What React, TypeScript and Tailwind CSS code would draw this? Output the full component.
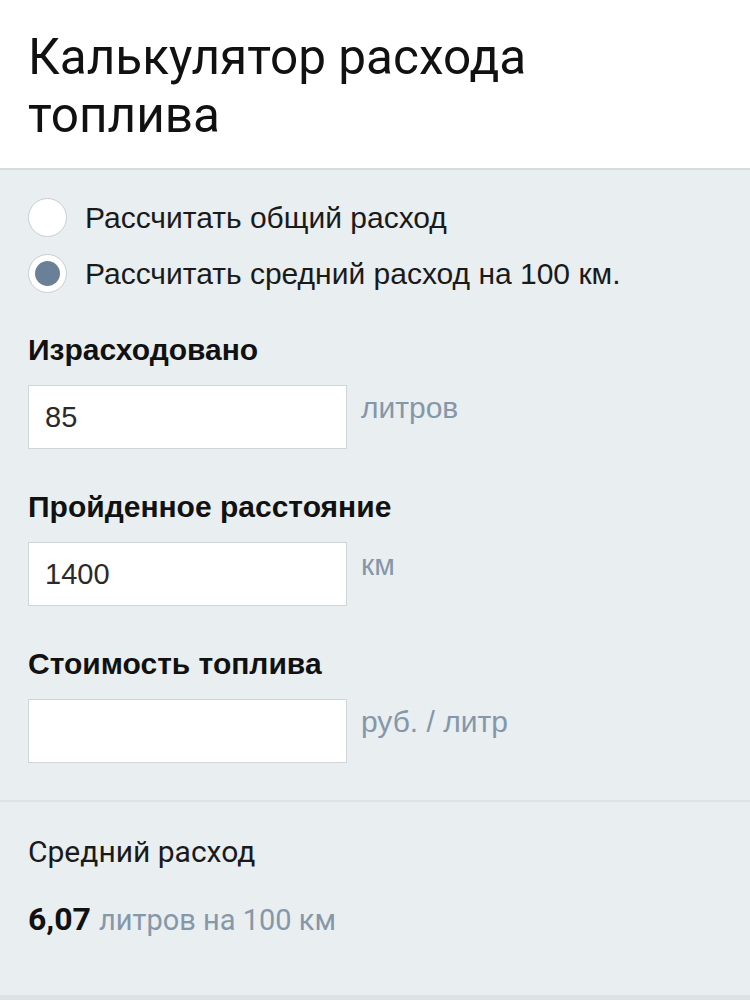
import * as React from "react";

// Fuel consumption calculator (mobile view)

type Mode = "total" | "average";

interface FieldProps {
  label: string;
  value: string;
  unit: string;
  first?: boolean;
  onChange: (v: string) => void;
}

function Field({ label, value, unit, first = false, onChange }: FieldProps) {
  return (
    <div className={first ? "pt-[31px]" : "pt-[40px]"}>
      <div className="text-[30px] font-bold leading-[36px] text-[#111]">{label}</div>
      <div className="mt-[17px] flex items-start gap-[14px]">
        <input
          value={value}
          onChange={(e) => onChange(e.target.value)}
          className="h-[64px] w-[319px] border border-[#cfd5d9] bg-white px-[16px] text-[29px] text-[#2a2a2a] outline-none"
        />
        <span className="pt-[5px] text-[30px] leading-[36px] text-[#8597a8]">{unit}</span>
      </div>
    </div>
  );
}

function Radio({ checked, label, onSelect }: { checked: boolean; label: string; onSelect: () => void }) {
  return (
    <button type="button" onClick={onSelect} className="flex h-[56px] items-center gap-[18px] text-left">
      <span className="flex h-[39px] w-[39px] items-center justify-center rounded-full border border-[#c9ced2] bg-white">
        {checked && <span className="h-[25px] w-[25px] rounded-full bg-[#6a8097]" />}
      </span>
      <span className="text-[30px] text-[#1a1a1a]">{label}</span>
    </button>
  );
}

export default function App() {
  const [mode, setMode] = React.useState<Mode>("average");
  const [fuel, setFuel] = React.useState("85");
  const [distance, setDistance] = React.useState("1400");
  const [price, setPrice] = React.useState("");

  const avg = (parseFloat(fuel) / parseFloat(distance)) * 100;
  const avgText = isFinite(avg) ? avg.toFixed(2).replace(".", ",") : "—";

  return (
    <div className="min-h-[1000px] bg-[#e9eef0] font-['Liberation_Sans',Arial,sans-serif]">
      <header className="border-b-2 border-[#d6dbde] bg-white px-[28px] pb-[24px] pt-[28px]">
        <h1 className="font-['Roboto',sans-serif] text-[49.5px] font-normal leading-[58px] text-[#111]">
          Калькулятор расхода
          <br />
          топлива
        </h1>
      </header>

      <main className="border-b-[6px] border-[#dde2e5]">
        <section className="px-[28px] pb-[37px] pt-[19px]">
          <div className="flex flex-col">
            <Radio checked={mode === "total"} label="Рассчитать общий расход" onSelect={() => setMode("total")} />
            <Radio
              checked={mode === "average"}
              label="Рассчитать средний расход на 100 км."
              onSelect={() => setMode("average")}
            />
          </div>
          <Field first label="Израсходовано" value={fuel} unit="литров" onChange={setFuel} />
          <Field label="Пройденное расстояние" value={distance} unit="км" onChange={setDistance} />
          <Field label="Стоимость топлива" value={price} unit="руб. / литр" onChange={setPrice} />
        </section>

        <section className="border-t-2 border-[#dde2e5] px-[28px] pb-[55px] pt-[30px] font-['Roboto',sans-serif]">
          <div className="text-[30px] leading-[40px] text-[#1a1a1a]">Средний расход</div>
          <div className="mt-[27px] flex items-baseline gap-[8px] leading-[40px]">
            <span className="text-[32px] font-bold text-[#111]">{avgText}</span>
            <span className="text-[29px] text-[#8597a8]">литров на 100 км</span>
          </div>
        </section>
      </main>
    </div>
  );
}
